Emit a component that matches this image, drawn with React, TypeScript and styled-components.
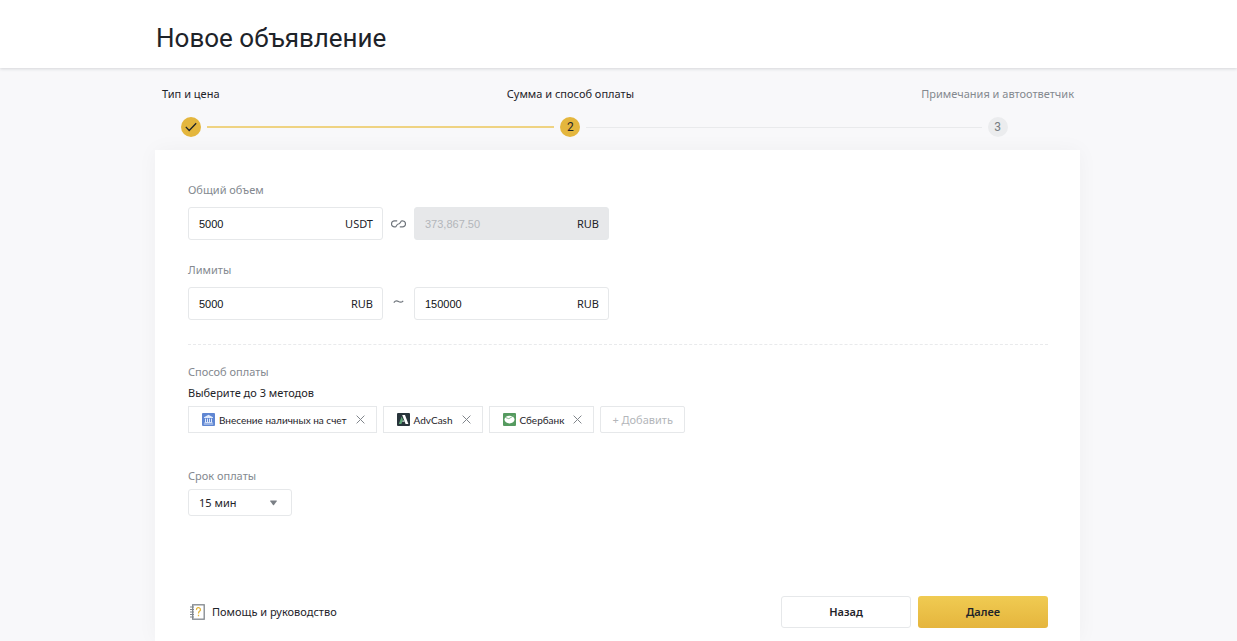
import React from 'react';
import styled, { createGlobalStyle } from 'styled-components';

const color = {
  ink: '#1e2329',
  muted: '#84898f',
  faint: '#b3b6ba',
  line: '#e6e8ea',
  page: '#f8f8fa',
  gold: '#e4b63d',
};

const GlobalStyle = createGlobalStyle`
  *, *::before, *::after { box-sizing: border-box; }
  body {
    margin: 0;
    background: ${color.page};
    color: ${color.ink};
    font: 11px/16px 'Noto Sans', sans-serif;
  }
  button, input, select { font: inherit; color: inherit; }
`;

const Page = styled.div`
  min-height: 100vh;
  display: flex;
  flex-direction: column;
`;

const Header = styled.header`
  padding: 22px 156px 14px;
  background: #fff;
  box-shadow: 0 1px 3px rgba(30, 35, 41, 0.16);
`;

const Title = styled.h1`
  margin: 0;
  font: 400 26px/32px Roboto, sans-serif;
`;

const Main = styled.main`
  flex: 1;
  display: flex;
  flex-direction: column;
  padding: 18px 157px 0 155px;
`;

const Steps = styled.ol`
  display: flex;
  align-items: flex-end;
  margin: 0;
  padding: 0 6px 13px 7px;
  list-style: none;
`;

const Step = styled.li<{ $pending?: boolean }>`
  display: flex;
  flex-direction: column;
  gap: 15px;
  color: ${(p) => (p.$pending ? color.muted : color.ink)};
  white-space: nowrap;
`;

const Track = styled.div`
  display: flex;
  align-items: center;
  gap: 6px;
`;

const Line = styled.span<{ $tone: 'gold' | 'grey' | 'none' }>`
  flex: 1;
  height: ${(p) => (p.$tone === 'gold' ? 2 : 1)}px;
  background: ${(p) => ({ gold: '#efd382', grey: '#e9eaec', none: 'transparent' })[p.$tone]};
`;

const Connector = styled.li`
  flex: 1;
  display: flex;
  align-items: center;
  height: 20px;
`;

const Dot = styled.span<{ $pending?: boolean }>`
  display: grid;
  place-items: center;
  width: 20px;
  height: 20px;
  border-radius: 50%;
  background: ${(p) => (p.$pending ? '#ebecee' : color.gold)};
  color: ${(p) => (p.$pending ? '#777c82' : color.ink)};
  font: 12px/20px Roboto, sans-serif;
`;

const Card = styled.form`
  flex: 1;
  display: flex;
  flex-direction: column;
  padding: 32px 32px 13px 33px;
  background: #fff;
  box-shadow: 0 0 20px rgba(30, 35, 41, 0.04);
`;

const Group = styled.section<{ $gap?: number; $space?: number }>`
  display: flex;
  flex-direction: column;
  align-items: flex-start;
  gap: ${(p) => p.$gap ?? 5}px;
  margin-bottom: ${(p) => p.$space ?? 0}px;
`;

const Label = styled.label`
  color: ${color.muted};
`;

const Caption = styled.div`
  color: ${color.muted};
`;

const FieldRow = styled.div`
  display: grid;
  grid-template-columns: 195px 31px 195px;
  align-items: center;
  justify-items: stretch;
`;

const Joint = styled.span`
  display: grid;
  place-items: center;
  color: #6f757c;
`;

const Field = styled.div<{ $locked?: boolean }>`
  display: flex;
  align-items: center;
  height: 33px;
  padding: 0 9px 0 10px;
  border: 1px solid ${color.line};
  border-radius: 3px;
  background: ${(p) => (p.$locked ? '#e7e8ea' : '#fff')};
`;

const Value = styled.input`
  flex: 1;
  min-width: 0;
  padding: 0;
  border: 0;
  outline: 0;
  background: transparent;
  font: 11px/16px 'Liberation Sans', sans-serif;
  color: #0f1216;
  &:disabled { color: ${color.faint}; }
`;

const Divider = styled.hr`
  width: 100%;
  margin: 0 0 19px;
  border: 0;
  border-top: 1px dashed #e9eaec;
`;

const Chips = styled.div`
  display: flex;
  flex-wrap: wrap;
  gap: 6px;
`;

const Chip = styled.div`
  display: flex;
  align-items: center;
  height: 27px;
  padding: 0 11px 0 13px;
  border: 1px solid ${color.line};
  font: 10px/16px Lato, sans-serif;
`;

const ChipText = styled.span`
  margin: 0 9px 0 4px;
`;

const Remove = styled.button`
  display: grid;
  padding: 0;
  border: 0;
  background: none;
  color: #80858b;
  cursor: pointer;
`;

const Add = styled.button`
  height: 27px;
  padding: 0 11px;
  border: 1px solid ${color.line};
  border-radius: 2px;
  background: #fff;
  color: ${color.faint};
  cursor: pointer;
`;

const SelectBox = styled.div`
  display: grid;
  grid-template-columns: 104px;
  align-items: center;
  & > * { grid-area: 1 / 1; }
  & > svg {
    justify-self: end;
    margin-right: 14px;
    pointer-events: none;
  }
`;

const Select = styled.select`
  appearance: none;
  width: 100%;
  height: 27px;
  padding: 0 10px;
  border: 1px solid ${color.line};
  border-radius: 3px;
  background: #fff;
`;

const Footer = styled.footer`
  display: flex;
  align-items: center;
  gap: 7px;
  margin-top: auto;
`;

const Help = styled.a`
  display: flex;
  align-items: center;
  gap: 7px;
  margin-right: auto;
  padding-left: 2px;
  color: inherit;
  text-decoration: none;
`;

const Action = styled.button<{ $primary?: boolean }>`
  width: 130px;
  height: 32px;
  padding: 0;
  border: ${(p) => (p.$primary ? '0' : `1px solid ${color.line}`)};
  border-radius: 3px;
  background: ${(p) => (p.$primary ? 'linear-gradient(#f0cb52, #e5b53d)' : '#fff')};
  font-weight: 600;
  cursor: pointer;
`;

const CheckIcon = () => (
  <svg width="12" height="10" viewBox="0 0 12 10" fill="none" stroke="#1e2329" strokeWidth="1.3" aria-hidden="true">
    <path d="M.8 4.9 4.2 8.5 11.2 1.3" />
  </svg>
);

const LinkIcon = () => (
  <svg width="15" height="8" viewBox="0 0 15 8" fill="none" stroke="currentColor" strokeWidth="1.2" aria-hidden="true">
    <path d="M6.2 .9H3.5A2.9 2.9 0 0 0 3.5 6.9H4.2C5.6 6.9 5.4 4 7.5 4S9.4 .9 10.8 .9H11.5A2.9 2.9 0 0 1 11.5 6.9H8.8" />
  </svg>
);

const TildeIcon = () => (
  <svg width="11" height="10" viewBox="0 0 11 10" fill="none" stroke="currentColor" strokeWidth="1.2" aria-hidden="true">
    <path d="M.8 3.6C2.4 1.6 3.9 1.6 5.5 2.6S8.6 3.6 10.2 1.8" />
  </svg>
);

const CrossIcon = () => (
  <svg width="9" height="9" viewBox="0 0 9 9" fill="none" stroke="currentColor" strokeWidth="1" aria-hidden="true">
    <path d="M.6.6 8.4 8.4M8.4.6.6 8.4" />
  </svg>
);

const BankIcon = () => (
  <svg width="13" height="13" viewBox="0 0 13 13" aria-hidden="true">
    <rect width="13" height="13" rx="1" fill="#5f86d2" />
    <path d="M6.5 1.8 11 4.2V5H2V4.2Z" fill="#dfe9fb" />
    <path d="M3.5 5.6V9M5.5 5.6V9M7.5 5.6V9M9.5 5.6V9" stroke="#dfe9fb" strokeWidth="1" />
    <path d="M2.6 9.5H10.4M1.8 11H11.2" stroke="#dfe9fb" strokeWidth=".9" />
  </svg>
);

const AdvCashIcon = () => (
  <svg width="13" height="13" viewBox="0 0 13 13" aria-hidden="true">
    <rect width="13" height="13" rx="1" fill="#28343b" />
    <path d="M5.2 2H8L11.4 11H8.6Z" fill="#fff" />
    <path d="M4.7 3.6 6 7 4.3 11H1.8Z" fill="#5fa777" />
    <path d="M4.6 8.2 7 7.3 7.6 9Z" fill="#d5e6da" />
  </svg>
);

const SberIcon = () => (
  <svg width="13" height="13" viewBox="0 0 13 13" aria-hidden="true">
    <rect width="13" height="13" rx="1" fill="#559a5f" />
    <ellipse cx="6.5" cy="6.6" rx="5" ry="3.9" fill="#fff" />
    <path d="M2.2 4.4 5.8 5.7 11.4 2.4" fill="none" stroke="#7db386" strokeWidth=".9" />
  </svg>
);

const ArrowIcon = () => (
  <svg width="9" height="6" viewBox="0 0 9 6" fill="#7a7f85" aria-hidden="true">
    <path d="M1.5 .5H7.5Q8.1.6 7.7 1.2L5 5Q4.5 5.5 4 5L1.3 1.2Q.9.6 1.5 .5Z" />
  </svg>
);

const GuideIcon = () => (
  <svg width="15" height="16" viewBox="0 0 15 16" fill="none" aria-hidden="true">
    <rect x="2.7" y=".8" width="11.5" height="14.4" stroke="#80868c" strokeWidth="1.3" />
    <path d="M0 3H4M0 5.5H4M0 8H4M0 10.5H4M0 13H4" stroke="#80868c" strokeWidth="1" />
    <path d="M6.5 6A2 2 0 1 1 9.5 7.3Q8.5 8 8.5 9.4M8.5 10.8V12.2" stroke="#e4b63d" strokeWidth="1.3" />
  </svg>
);

const methods = [
  { name: 'Внесение наличных на счет', Icon: BankIcon },
  { name: 'AdvCash', Icon: AdvCashIcon },
  { name: 'Сбербанк', Icon: SberIcon },
];

export default function App() {
  return (
    <Page>
      <GlobalStyle />
      <Header>
        <Title>Новое объявление</Title>
      </Header>
      <Main>
        <Steps>
          <Step>
            <span>Тип и цена</span>
            <Track>
              <Line $tone="none" />
              <Dot><CheckIcon /></Dot>
              <Line $tone="gold" />
            </Track>
          </Step>
          <Connector aria-hidden="true"><Line $tone="gold" /></Connector>
          <Step aria-current="step">
            <span>Сумма и способ оплаты</span>
            <Track>
              <Line $tone="gold" />
              <Dot>2</Dot>
              <Line $tone="grey" />
            </Track>
          </Step>
          <Connector aria-hidden="true"><Line $tone="grey" /></Connector>
          <Step $pending>
            <span>Примечания и автоответчик</span>
            <Track>
              <Line $tone="grey" />
              <Dot $pending>3</Dot>
              <Line $tone="none" />
            </Track>
          </Step>
        </Steps>
        <Card onSubmit={(e) => e.preventDefault()}>
          <Group $gap={9} $space={22}>
            <Label htmlFor="total">Общий объем</Label>
            <FieldRow>
              <Field>
                <Value id="total" defaultValue="5000" />
                <span>USDT</span>
              </Field>
              <Joint><LinkIcon /></Joint>
              <Field $locked>
                <Value aria-label="Общий объем, RUB" defaultValue="373,867.50" disabled />
                <span>RUB</span>
              </Field>
            </FieldRow>
          </Group>
          <Group $gap={9} $space={24}>
            <Label htmlFor="min">Лимиты</Label>
            <FieldRow>
              <Field>
                <Value id="min" defaultValue="5000" />
                <span>RUB</span>
              </Field>
              <Joint><TildeIcon /></Joint>
              <Field>
                <Value aria-label="Лимиты, максимум" defaultValue="150000" />
                <span>RUB</span>
              </Field>
            </FieldRow>
          </Group>
          <Divider />
          <Group $space={35}>
            <Caption>Способ оплаты</Caption>
            <div>Выберите до 3 методов</div>
            <Chips>
              {methods.map(({ name, Icon }) => (
                <Chip key={name}>
                  <Icon />
                  <ChipText>{name}</ChipText>
                  <Remove type="button" aria-label={`Удалить ${name}`}><CrossIcon /></Remove>
                </Chip>
              ))}
              <Add type="button">+ Добавить</Add>
            </Chips>
          </Group>
          <Group $space={24}>
            <Label htmlFor="term">Срок оплаты</Label>
            <SelectBox>
              <Select id="term" defaultValue="15">
                <option value="15">15 мин</option>
                <option value="30">30 мин</option>
              </Select>
              <ArrowIcon />
            </SelectBox>
          </Group>
          <Footer>
            <Help href="#help">
              <GuideIcon />
              Помощь и руководство
            </Help>
            <Action type="button">Назад</Action>
            <Action type="submit" $primary>Далее</Action>
          </Footer>
        </Card>
      </Main>
    </Page>
  );
}
